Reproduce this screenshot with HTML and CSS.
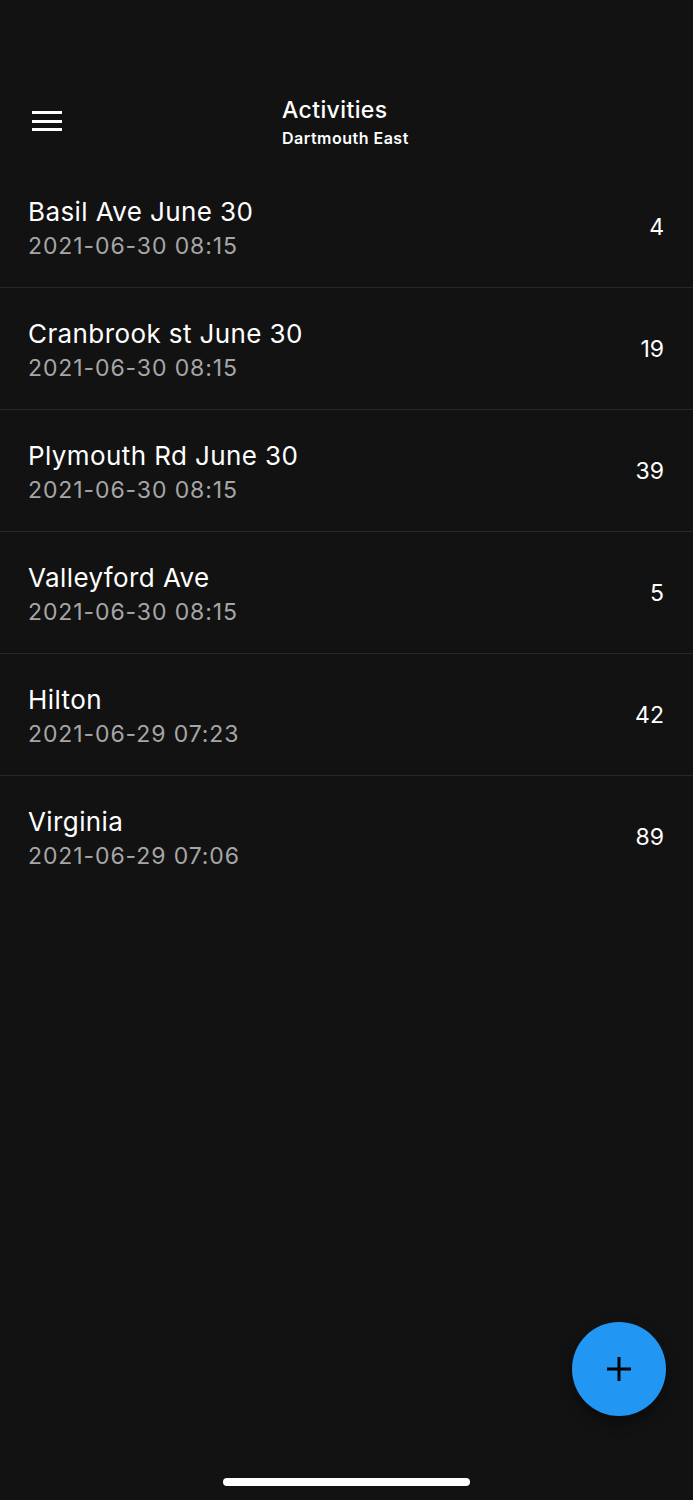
FILE: index.html
```html
<!DOCTYPE html>
<html lang="en">
<head>
    <meta charset="UTF-8">
    <title>Activities</title>
    <link rel="stylesheet" href="styles.css">
</head>
<body>
<div class="screen">
    <div class="app-bar">
        <a class="menu-btn">
            <span></span>
            <span></span>
            <span></span>
        </a>
        <div class="app-title">
            <div class="title">Activities</div>
            <div class="subtitle">Dartmouth East</div>
        </div>
    </div>

    <ul class="list">
        <li class="item">
            <div class="item-text">
                <div class="item-name">Basil Ave June 30</div>
                <div class="item-date">2021-06-30 08:15</div>
            </div>
            <div class="item-count">4</div>
        </li>
        <li class="item">
            <div class="item-text">
                <div class="item-name">Cranbrook st June 30</div>
                <div class="item-date">2021-06-30 08:15</div>
            </div>
            <div class="item-count">19</div>
        </li>
        <li class="item">
            <div class="item-text">
                <div class="item-name">Plymouth Rd June 30</div>
                <div class="item-date">2021-06-30 08:15</div>
            </div>
            <div class="item-count">39</div>
        </li>
        <li class="item">
            <div class="item-text">
                <div class="item-name">Valleyford Ave</div>
                <div class="item-date">2021-06-30 08:15</div>
            </div>
            <div class="item-count">5</div>
        </li>
        <li class="item">
            <div class="item-text">
                <div class="item-name">Hilton</div>
                <div class="item-date">2021-06-29 07:23</div>
            </div>
            <div class="item-count">42</div>
        </li>
        <li class="item last">
            <div class="item-text">
                <div class="item-name">Virginia</div>
                <div class="item-date">2021-06-29 07:06</div>
            </div>
            <div class="item-count">89</div>
        </li>
    </ul>

    <a class="fab">
        <svg width="26" height="26" viewBox="0 0 26 26">
            <path d="M13 1v24M1 13h24" stroke="#000" stroke-width="3" fill="none"/>
        </svg>
    </a>

    <div class="home-bar"></div>
</div>
</body>
</html>
```

FILE: styles.css
```css
* {
    margin: 0;
    padding: 0;
    box-sizing: border-box;
}

html, body {
    background-color: #121212;
}

body {
    font-family: Inter, "Noto Sans", sans-serif;
    color: #fff;
}

.screen {
    width: 693px;
    height: 1500px;
    position: relative;
    overflow: hidden;
}

/* top bar */
.app-bar {
    height: 166px;
    padding-top: 76px;
    display: flex;
    align-items: center;
    position: relative;
}

.menu-btn {
    width: 30px;
    margin-left: 32px;
    display: flex;
    flex-direction: column;
    gap: 5.5px;
}

.menu-btn span {
    display: block;
    height: 3px;
    background-color: #fff;
}

.app-title {
    position: absolute;
    left: 282px;
    top: 97px;
}

.title {
    font-size: 23px;
    font-weight: 500;
    line-height: 26px;
    letter-spacing: 0.4px;
}

.subtitle {
    font-size: 16px;
    font-weight: 600;
    line-height: 20px;
    letter-spacing: 0.5px;
    margin-top: 5px;
}

/* list */
.list {
    list-style: none;
}

.item {
    height: 122px;
    padding: 0 29px 0 28px;
    display: flex;
    align-items: center;
    border-bottom: 1px solid #282828;
}

.item.last {
    border-bottom: none;
}

.item-text {
    flex: 1;
    margin-top: 4px;
}

.item-name {
    font-size: 26px;
    line-height: 34px;
    letter-spacing: 0.4px;
}

.item-date {
    font-size: 23px;
    line-height: 34px;
    letter-spacing: 0.9px;
    color: #a6a6a6;
}

.item-count {
    font-size: 23px;
}

/* floating button */
.fab {
    position: absolute;
    left: 572px;
    top: 1322px;
    width: 94px;
    height: 94px;
    border-radius: 50%;
    background-color: #2196f3;
    display: flex;
    align-items: center;
    justify-content: center;
    box-shadow: 0 6px 14px rgba(0, 0, 0, 0.45);
}

.home-bar {
    position: absolute;
    left: 223px;
    top: 1478px;
    width: 247px;
    height: 8px;
    border-radius: 4px;
    background-color: #fff;
}
```
